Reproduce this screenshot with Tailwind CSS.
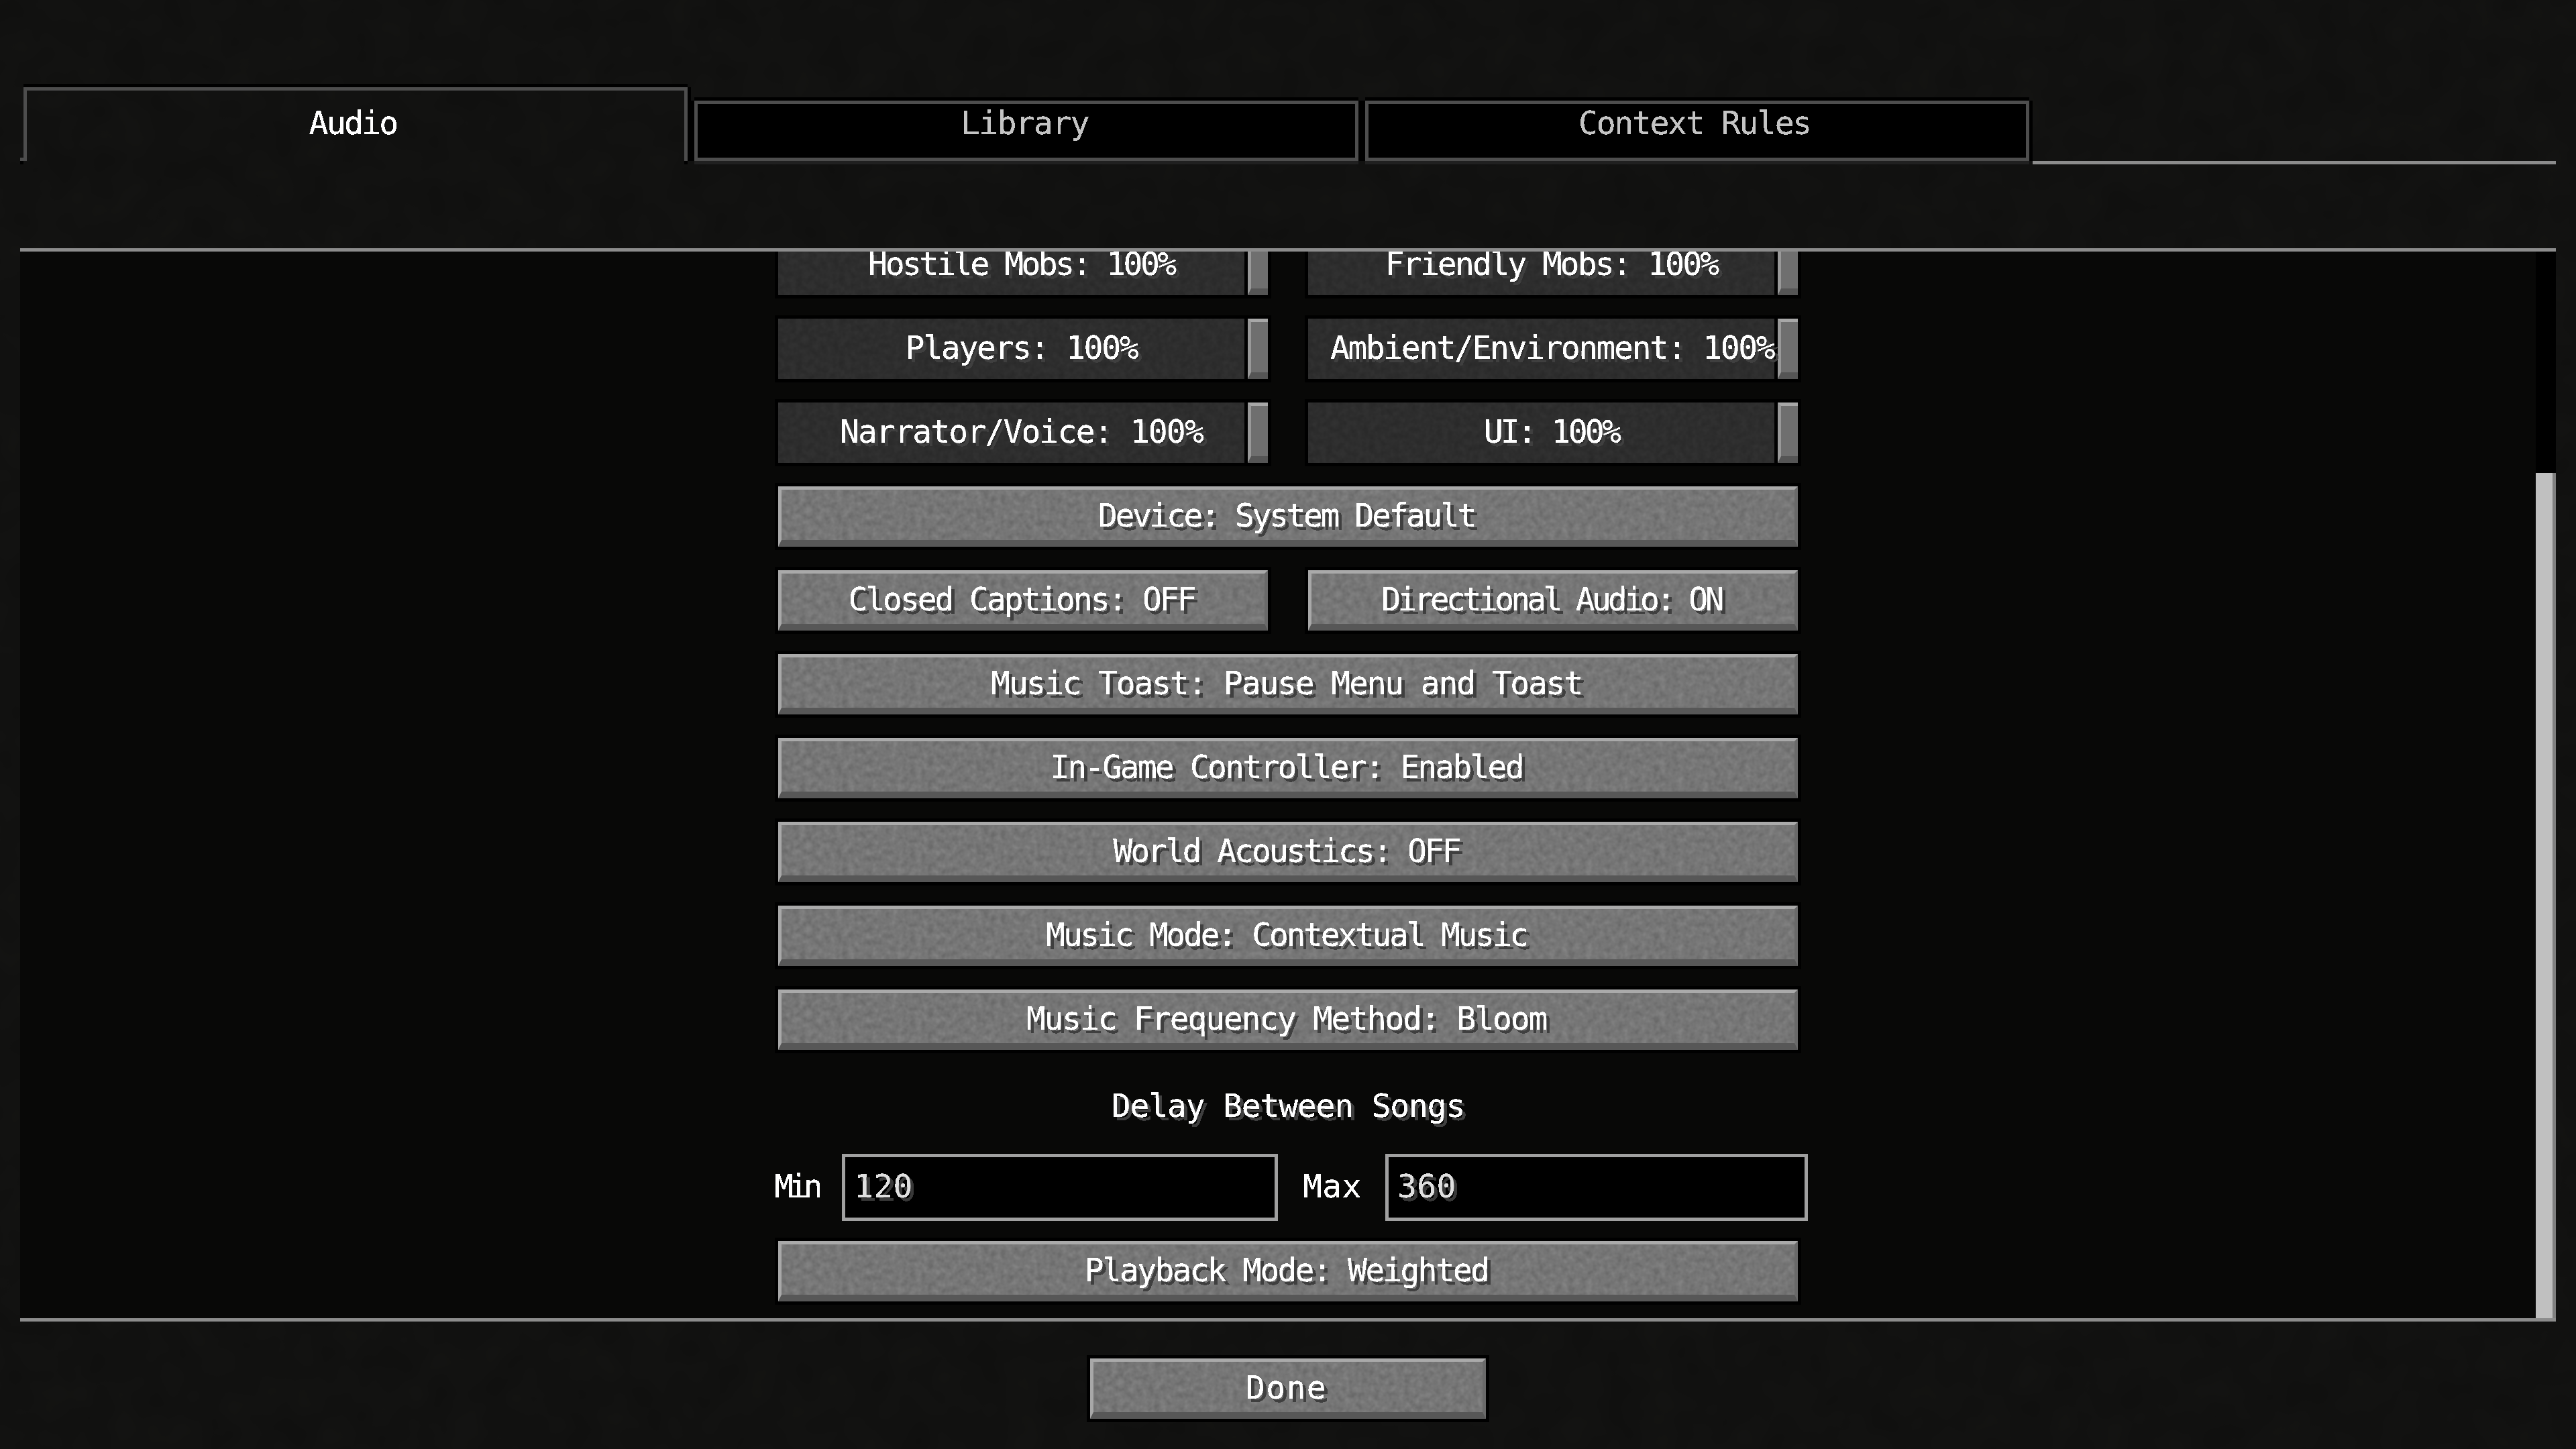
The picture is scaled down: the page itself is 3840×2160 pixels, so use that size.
<!DOCTYPE html>
<html lang="en">
<head>
<meta charset="utf-8">
<title>Audio settings</title>
<script src="https://cdn.jsdelivr.net/npm/@tailwindcss/browser@4"></script>
</head>
<body class="bg-[#111110]">
<svg class="absolute w-0 h-0" aria-hidden="true">
  <defs>
    <filter id="stone" x="0" y="0" width="100%" height="100%" color-interpolation-filters="sRGB">
      <feTurbulence type="fractalNoise" baseFrequency="0.11" numOctaves="2" seed="4"/>
      <feColorMatrix type="matrix" values="0.15 0 0 0 0.425  0.15 0 0 0 0.425  0.15 0 0 0 0.425  0 0 0 0 1"/>
    </filter>
    <filter id="dirt" x="0" y="0" width="100%" height="100%" color-interpolation-filters="sRGB">
      <feTurbulence type="fractalNoise" baseFrequency="0.018" numOctaves="2" seed="9"/>
      <feColorMatrix type="matrix" values="0.15 0 0 0 0.425  0.15 0 0 0 0.425  0.15 0 0 0 0.425  0 0 0 0 1"/>
    </filter>
    <filter id="crisp" x="-5%" y="-20%" width="110%" height="140%" color-interpolation-filters="sRGB">
      <feComponentTransfer><feFuncA type="discrete" tableValues="0 1 1"/></feComponentTransfer>
    </filter>
  </defs>
</svg>

<div class="relative w-[3840px] h-[2160px] overflow-hidden bg-[#111110] flex flex-col whitespace-nowrap text-white text-[48px] leading-[48px] font-['DejaVu_Sans_Mono',monospace]">
  <svg class="absolute inset-0 w-full h-full mix-blend-overlay" aria-hidden="true"><rect width="100%" height="100%" filter="url(#dirt)"/></svg>

  <!-- tabs -->
  <div class="relative flex items-end gap-[10px] ml-[35px] mr-[30px] mt-[130px]">
    <div class="relative w-[990px] h-[110px] mb-[5px] border-t-[5px] border-x-[5px] border-[#4d4d4d] shadow-[0_-5px_0_#000,5px_0_0_#000] pt-[24px] flex justify-center">
      <span class="mr-[8px] tracking-[-2.7px] [filter:url(#crisp)]">Audio</span>
      <span class="absolute left-[-10px] bottom-0 w-[5px] h-[5px] bg-[#4d4d4d]"></span>
      <span class="absolute left-[-10px] bottom-[-5px] w-[5px] h-[5px] bg-black"></span>
      <span class="absolute right-[-5px] bottom-[-5px] w-[5px] h-[5px] bg-black"></span>
    </div>
    <div class="w-[990px] h-[90px] mb-[5px] border-[5px] border-[#4d4d4d] bg-black shadow-[0_-5px_0_#000,5px_0_0_#000,-5px_0_0_#000,0_5px_0_#202020] pt-[4px] flex justify-center text-[#c4c4c4]">
      <span class="mr-[5px] tracking-[-1.65px] [filter:url(#crisp)]">Library</span>
    </div>
    <div class="w-[990px] h-[90px] mb-[5px] border-[5px] border-[#4d4d4d] bg-black shadow-[0_-5px_0_#000,5px_0_0_#000,-5px_0_0_#000,0_5px_0_#202020] pt-[4px] flex justify-center text-[#c4c4c4]">
      <span class="mr-[8px] tracking-[-2.3px] [filter:url(#crisp)]">Context Rules</span>
    </div>
    <div class="flex-1 h-[5px] ml-[-5px] bg-[#8c8c8c]"></div>
  </div>

  <!-- header rule -->
  <div class="relative h-[5px] mx-[30px] mt-[125px] bg-[#8c8c8c] z-10"></div>

  <!-- scrolling list -->
  <div class="relative h-[1590px] mx-[30px] bg-[#080807] overflow-hidden flex justify-center">
    <div class="relative w-[1520px] mt-[-25px] flex flex-col">
      <div class="flex flex-col gap-[35px]">

        <div class="flex justify-between">
          <div class="w-[730px] h-[90px] flex gap-[5px] bg-black shadow-[0_0_0_5px_#000]">
            <div class="relative flex-1 bg-[#2d2d2d] flex items-center justify-center pl-[35px] pb-[5px]">
              <svg class="absolute inset-0 w-full h-full mix-blend-overlay" aria-hidden="true"><rect width="100%" height="100%" filter="url(#stone)"/></svg>
              <span class="relative mr-[5px] tracking-[-3.55px] [text-shadow:5px_5px_0_#3f3f3f] [filter:url(#crisp)]">Hostile Mobs: 100%</span>
            </div>
            <div class="w-[30px] bg-[#6f6f6f] border-t-[5px] border-l-[5px] border-b-[10px] border-t-[#a8a8a8] border-l-[#999999] border-b-[#555555]"></div>
          </div>
          <div class="w-[730px] h-[90px] flex gap-[5px] bg-black shadow-[0_0_0_5px_#000]">
            <div class="relative flex-1 bg-[#2d2d2d] flex items-center justify-center pl-[35px] pb-[5px]">
              <svg class="absolute inset-0 w-full h-full mix-blend-overlay" aria-hidden="true"><rect width="100%" height="100%" filter="url(#stone)"/></svg>
              <span class="relative mr-[5px] tracking-[-2.8px] [text-shadow:5px_5px_0_#3f3f3f] [filter:url(#crisp)]">Friendly Mobs: 100%</span>
            </div>
            <div class="w-[30px] bg-[#6f6f6f] border-t-[5px] border-l-[5px] border-b-[10px] border-t-[#a8a8a8] border-l-[#999999] border-b-[#555555]"></div>
          </div>
        </div>

        <div class="flex justify-between">
          <div class="w-[730px] h-[90px] flex gap-[5px] bg-black shadow-[0_0_0_5px_#000]">
            <div class="relative flex-1 bg-[#2d2d2d] flex items-center justify-center pl-[35px] pb-[5px]">
              <svg class="absolute inset-0 w-full h-full mix-blend-overlay" aria-hidden="true"><rect width="100%" height="100%" filter="url(#stone)"/></svg>
              <span class="relative mr-[5px] tracking-[-2.3px] [text-shadow:5px_5px_0_#3f3f3f] [filter:url(#crisp)]">Players: 100%</span>
            </div>
            <div class="w-[30px] bg-[#6f6f6f] border-t-[5px] border-l-[5px] border-b-[10px] border-t-[#a8a8a8] border-l-[#999999] border-b-[#555555]"></div>
          </div>
          <div class="w-[730px] h-[90px] flex gap-[5px] bg-black shadow-[0_0_0_5px_#000]">
            <div class="relative flex-1 bg-[#2d2d2d] flex items-center justify-center pl-[32px] pb-[5px]">
              <svg class="absolute inset-0 w-full h-full mix-blend-overlay" aria-hidden="true"><rect width="100%" height="100%" filter="url(#stone)"/></svg>
              <span class="relative tracking-[-2.45px] [text-shadow:5px_5px_0_#3f3f3f] [filter:url(#crisp)]">Ambient/Environment: 100%</span>
            </div>
            <div class="w-[30px] bg-[#6f6f6f] border-t-[5px] border-l-[5px] border-b-[10px] border-t-[#a8a8a8] border-l-[#999999] border-b-[#555555]"></div>
          </div>
        </div>

        <div class="flex justify-between">
          <div class="w-[730px] h-[90px] flex gap-[5px] bg-black shadow-[0_0_0_5px_#000]">
            <div class="relative flex-1 bg-[#2d2d2d] flex items-center justify-center pl-[35px] pb-[5px]">
              <svg class="absolute inset-0 w-full h-full mix-blend-overlay" aria-hidden="true"><rect width="100%" height="100%" filter="url(#stone)"/></svg>
              <span class="relative mr-[5px] tracking-[-1.85px] [text-shadow:5px_5px_0_#3f3f3f] [filter:url(#crisp)]">Narrator/Voice: 100%</span>
            </div>
            <div class="w-[30px] bg-[#6f6f6f] border-t-[5px] border-l-[5px] border-b-[10px] border-t-[#a8a8a8] border-l-[#999999] border-b-[#555555]"></div>
          </div>
          <div class="w-[730px] h-[90px] flex gap-[5px] bg-black shadow-[0_0_0_5px_#000]">
            <div class="relative flex-1 bg-[#2d2d2d] flex items-center justify-center pl-[35px] pb-[5px]">
              <svg class="absolute inset-0 w-full h-full mix-blend-overlay" aria-hidden="true"><rect width="100%" height="100%" filter="url(#stone)"/></svg>
              <span class="relative mr-[5px] tracking-[-3.75px] [text-shadow:5px_5px_0_#3f3f3f] [filter:url(#crisp)]">UI: 100%</span>
            </div>
            <div class="w-[30px] bg-[#6f6f6f] border-t-[5px] border-l-[5px] border-b-[10px] border-t-[#a8a8a8] border-l-[#999999] border-b-[#555555]"></div>
          </div>
        </div>

        <div class="relative h-[90px] bg-[#767676] border-t-[5px] border-l-[5px] border-r-[5px] border-b-[10px] border-t-[#aaaaaa] border-l-[#a8a8a8] border-r-[#6a6a6a] border-b-[#575757] shadow-[0_0_0_5px_#000] flex items-center justify-center">
          <svg class="absolute inset-0 w-full h-full mix-blend-overlay" aria-hidden="true"><rect width="100%" height="100%" filter="url(#stone)"/></svg>
          <span class="relative mr-[5px] tracking-[-3.4px] [text-shadow:5px_5px_0_#3f3f3f] [filter:url(#crisp)]">Device: System Default</span>
        </div>

        <div class="flex justify-between">
          <div class="relative w-[730px] h-[90px] bg-[#767676] border-t-[5px] border-l-[5px] border-r-[5px] border-b-[10px] border-t-[#aaaaaa] border-l-[#a8a8a8] border-r-[#6a6a6a] border-b-[#575757] shadow-[0_0_0_5px_#000] flex items-center justify-center">
            <svg class="absolute inset-0 w-full h-full mix-blend-overlay" aria-hidden="true"><rect width="100%" height="100%" filter="url(#stone)"/></svg>
            <span class="relative mr-[5px] tracking-[-3.1px] [text-shadow:5px_5px_0_#3f3f3f] [filter:url(#crisp)]">Closed Captions: OFF</span>
          </div>
          <div class="relative w-[730px] h-[90px] bg-[#767676] border-t-[5px] border-l-[5px] border-r-[5px] border-b-[10px] border-t-[#aaaaaa] border-l-[#a8a8a8] border-r-[#6a6a6a] border-b-[#575757] shadow-[0_0_0_5px_#000] flex items-center justify-center">
            <svg class="absolute inset-0 w-full h-full mix-blend-overlay" aria-hidden="true"><rect width="100%" height="100%" filter="url(#stone)"/></svg>
            <span class="relative mr-[5px] tracking-[-4.8px] [text-shadow:5px_5px_0_#3f3f3f] [filter:url(#crisp)]">Directional Audio: ON</span>
          </div>
        </div>

        <div class="relative h-[90px] bg-[#767676] border-t-[5px] border-l-[5px] border-r-[5px] border-b-[10px] border-t-[#aaaaaa] border-l-[#a8a8a8] border-r-[#6a6a6a] border-b-[#575757] shadow-[0_0_0_5px_#000] flex items-center justify-center">
          <svg class="absolute inset-0 w-full h-full mix-blend-overlay" aria-hidden="true"><rect width="100%" height="100%" filter="url(#stone)"/></svg>
          <span class="relative mr-[5px] tracking-[-2.2px] [text-shadow:5px_5px_0_#3f3f3f] [filter:url(#crisp)]">Music Toast: Pause Menu and Toast</span>
        </div>
        <div class="relative h-[90px] bg-[#767676] border-t-[5px] border-l-[5px] border-r-[5px] border-b-[10px] border-t-[#aaaaaa] border-l-[#a8a8a8] border-r-[#6a6a6a] border-b-[#575757] shadow-[0_0_0_5px_#000] flex items-center justify-center">
          <svg class="absolute inset-0 w-full h-full mix-blend-overlay" aria-hidden="true"><rect width="100%" height="100%" filter="url(#stone)"/></svg>
          <span class="relative mr-[5px] tracking-[-2.8px] [text-shadow:5px_5px_0_#3f3f3f] [filter:url(#crisp)]">In-Game Controller: Enabled</span>
        </div>
        <div class="relative h-[90px] bg-[#767676] border-t-[5px] border-l-[5px] border-r-[5px] border-b-[10px] border-t-[#aaaaaa] border-l-[#a8a8a8] border-r-[#6a6a6a] border-b-[#575757] shadow-[0_0_0_5px_#000] flex items-center justify-center">
          <svg class="absolute inset-0 w-full h-full mix-blend-overlay" aria-hidden="true"><rect width="100%" height="100%" filter="url(#stone)"/></svg>
          <span class="relative mr-[5px] tracking-[-3.1px] [text-shadow:5px_5px_0_#3f3f3f] [filter:url(#crisp)]">World Acoustics: OFF</span>
        </div>
        <div class="relative h-[90px] bg-[#767676] border-t-[5px] border-l-[5px] border-r-[5px] border-b-[10px] border-t-[#aaaaaa] border-l-[#a8a8a8] border-r-[#6a6a6a] border-b-[#575757] shadow-[0_0_0_5px_#000] flex items-center justify-center">
          <svg class="absolute inset-0 w-full h-full mix-blend-overlay" aria-hidden="true"><rect width="100%" height="100%" filter="url(#stone)"/></svg>
          <span class="relative mr-[5px] tracking-[-3.3px] [text-shadow:5px_5px_0_#3f3f3f] [filter:url(#crisp)]">Music Mode: Contextual Music</span>
        </div>
        <div class="relative h-[90px] bg-[#767676] border-t-[5px] border-l-[5px] border-r-[5px] border-b-[10px] border-t-[#aaaaaa] border-l-[#a8a8a8] border-r-[#6a6a6a] border-b-[#575757] shadow-[0_0_0_5px_#000] flex items-center justify-center">
          <svg class="absolute inset-0 w-full h-full mix-blend-overlay" aria-hidden="true"><rect width="100%" height="100%" filter="url(#stone)"/></svg>
          <span class="relative mr-[5px] tracking-[-2.15px] [text-shadow:5px_5px_0_#3f3f3f] [filter:url(#crisp)]">Music Frequency Method: Bloom</span>
        </div>
      </div>

      <div class="mt-[59px] text-center tracking-[-1.2px] [text-shadow:5px_5px_0_#3f3f3f] [filter:url(#crisp)]">Delay Between Songs</div>

      <div class="mt-[48px] ml-[-6px] w-[1541px] h-[100px] flex items-center">
        <span class="w-[101px] pb-[5px] tracking-[-7.2px] [filter:url(#crisp)]">Min</span>
        <div class="w-[650px] h-[100px] border-[5px] border-[#a0a0a0] bg-black pl-[13px] flex items-center pb-[5px] text-[#e0e0e0]">
          <span class="tracking-[0.4px] [text-shadow:5px_5px_0_#383838] [filter:url(#crisp)]">120</span>
        </div>
        <span class="w-[123px] ml-[37px] pb-[5px] tracking-[0.4px] [filter:url(#crisp)]">Max</span>
        <div class="w-[630px] h-[100px] border-[5px] border-[#a0a0a0] bg-black pl-[13px] flex items-center pb-[5px] text-[#e0e0e0]">
          <span class="tracking-[0.4px] [text-shadow:5px_5px_0_#383838] [filter:url(#crisp)]">360</span>
        </div>
      </div>

      <div class="relative mt-[30px] h-[90px] bg-[#767676] border-t-[5px] border-l-[5px] border-r-[5px] border-b-[10px] border-t-[#aaaaaa] border-l-[#a8a8a8] border-r-[#6a6a6a] border-b-[#575757] shadow-[0_0_0_5px_#000] flex items-center justify-center">
        <svg class="absolute inset-0 w-full h-full mix-blend-overlay" aria-hidden="true"><rect width="100%" height="100%" filter="url(#stone)"/></svg>
        <span class="relative mr-[5px] tracking-[-2.75px] [text-shadow:5px_5px_0_#3f3f3f] [filter:url(#crisp)]">Playback Mode: Weighted</span>
      </div>
    </div>

    <!-- scrollbar -->
    <div class="absolute right-0 top-0 bottom-0 w-[30px] bg-black flex flex-col justify-end">
      <div class="h-[1260px] bg-[#c0c0c0] border-r-[5px] border-[#808080]"></div>
    </div>
  </div>

  <!-- footer rule -->
  <div class="relative h-[5px] mx-[30px] bg-[#8c8c8c]"></div>

  <div class="relative self-center mt-[55px] w-[590px] h-[90px] bg-[#767676] border-t-[5px] border-l-[5px] border-r-[5px] border-b-[10px] border-t-[#aaaaaa] border-l-[#a8a8a8] border-r-[#6a6a6a] border-b-[#575757] shadow-[0_0_0_5px_#000] flex items-center justify-center">
    <svg class="absolute inset-0 w-full h-full mix-blend-overlay" aria-hidden="true"><rect width="100%" height="100%" filter="url(#stone)"/></svg>
    <span class="relative mr-[5px] tracking-[1.35px] [text-shadow:5px_5px_0_#3f3f3f] [filter:url(#crisp)]">Done</span>
  </div>
</div>
</body>
</html>
